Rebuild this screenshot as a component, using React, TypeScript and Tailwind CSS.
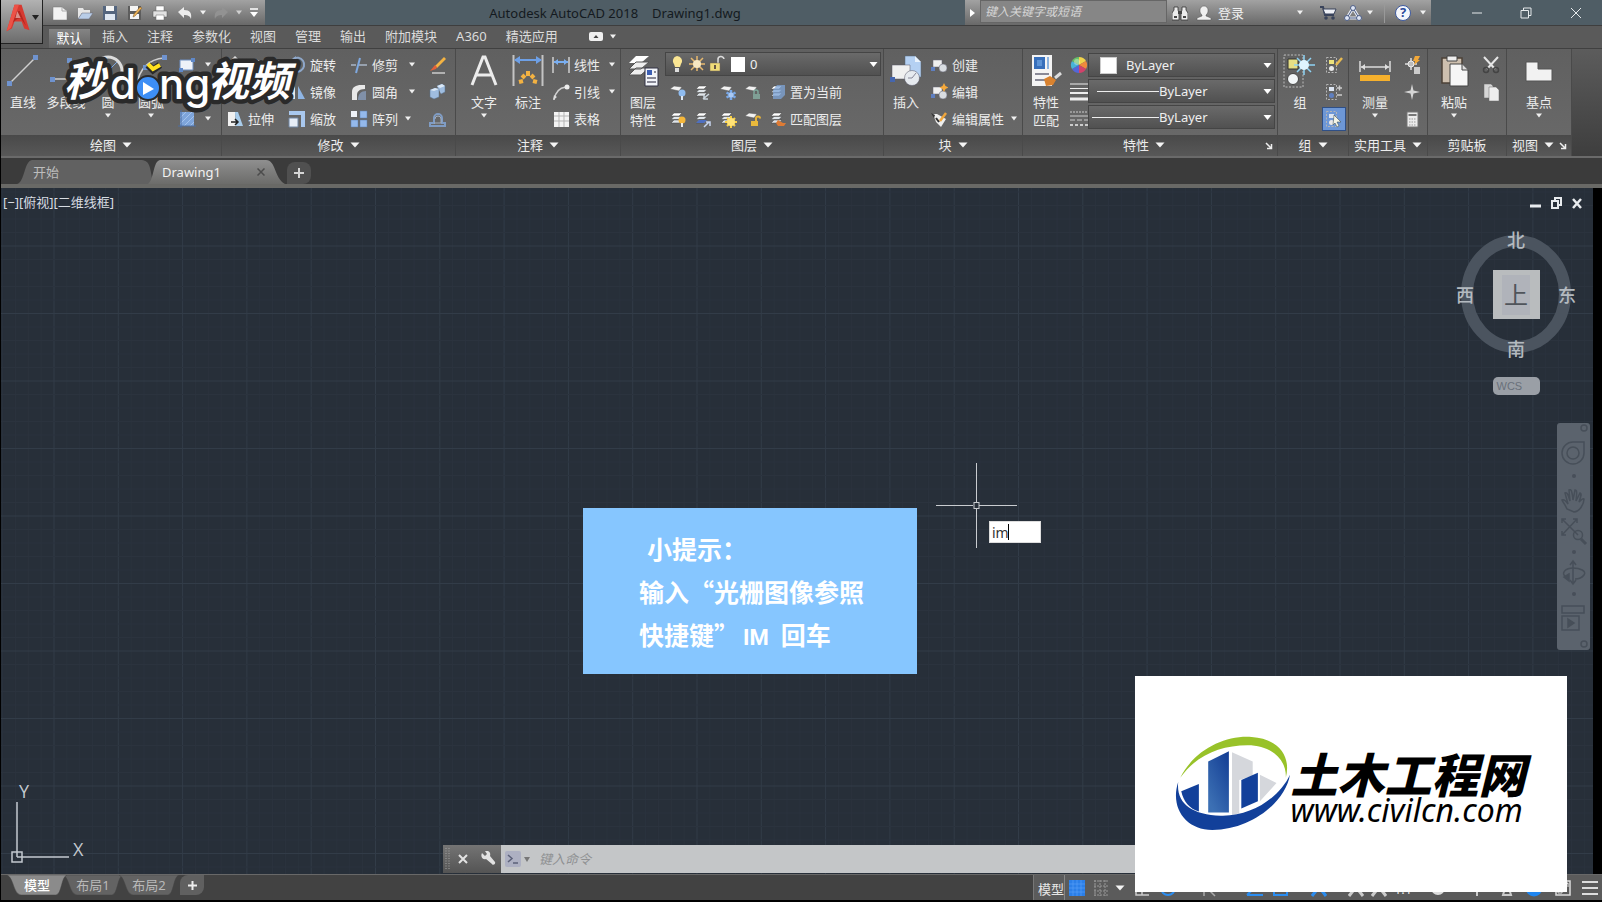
import React from 'react';

type IconProps = { w?: number; h?: number; box?: string; className?: string; children: React.ReactNode };

const Icon = ({ w = 18, h = 18, box, className = '', children }: IconProps) => (
  <svg width={w} height={h} viewBox={box || `0 0 ${w} ${h}`} fill="none" className={`shrink-0 ${className}`} aria-hidden="true">
    {children}
  </svg>
);

const Caret = ({ className = '' }: { className?: string }) => (
  <Icon w={8} h={5} className={className}><path d="M1 0.5h6l-3 4z" fill="#f0f0f0" /></Icon>
);

const BigCaret = () => <Icon w={10} h={6}><path d="M0.5 0.5h9l-4.5 5z" fill="#f4f4f4" /></Icon>;

const Launcher = () => (
  <Icon w={8} h={8} className="absolute right-1 top-[7px]">
    <path d="M1 1l5 5M6.5 2v4.5H2" stroke="#eee" strokeWidth="1.5" />
  </Icon>
);

/* ---------- ribbon building blocks ---------- */

type PanelProps = { title: string; width: string; caret?: boolean; launcher?: boolean; children: React.ReactNode };

const Panel = ({ title, width, caret = true, launcher, children }: PanelProps) => (
  <section className={`flex shrink-0 flex-col border-r border-[#4a4a4a] bg-linear-to-b from-[#606060] to-[#6a6a6a] ${width}`}>
    <div className="flex h-[86px]">{children}</div>
    <div className={`relative flex h-[21px] items-center justify-center gap-1.5 bg-linear-to-b from-[#494949] to-[#585858] pb-0.5 ${launcher ? 'pr-3' : ''}`}>
      <span>{title}</span>
      {caret && <BigCaret />}
      {launcher && <Launcher />}
    </div>
  </section>
);

type BigProps = { label: string; sub?: string; caret?: boolean; width?: string; children: React.ReactNode };

const BigButton = ({ label, sub, caret, width = 'w-11', children }: BigProps) => (
  <button className={`flex shrink-0 flex-col items-center pt-1.5 ${width}`}>
    {children}
    <span className="mt-1.5 leading-[18px] whitespace-nowrap">{label}</span>
    {sub && <span className="leading-[18px]">{sub}</span>}
    {caret && <Caret className="mt-0.5" />}
  </button>
);

const Column = ({ className = '', children }: { className?: string; children: React.ReactNode }) => (
  <div className={`flex shrink-0 flex-col pt-0.5 ${className}`}>{children}</div>
);

type SmallProps = { icon: React.ReactNode; label?: string; caret?: string; name?: string };

const SmallButton = ({ icon, label, caret, name }: SmallProps) => (
  <button className="flex h-[27px] items-center gap-0.5 whitespace-nowrap" aria-label={label ? undefined : name}>
    <span className="flex w-[22px] justify-center">{icon}</span>
    {label && <span>{label}</span>}
    {caret && <Caret className={caret} />}
  </button>
);

/* ---------- small icons ---------- */

const sheets = (
  <>
    <path d="M5 3h8l-3 3H2z" fill="#fff" stroke="#444" strokeWidth="0.5" />
    <path d="M5 6.5h8l-3 3H2zM5 10h8l-3 3H2z" fill="#dfe5ea" stroke="#444" strokeWidth="0.5" />
  </>
);
const oneSheet = <path d="M1 6l4-3 8 1-3 4z" fill="#f2f2f2" stroke="#555" strokeWidth="0.5" />;

const LayerIcon = ({ kind }: { kind: number }) => (
  <Icon>
    {[0, 2, 3, 8].includes(kind) ? oneSheet : sheets}
    {kind === 0 && <><circle cx="13" cy="10" r="3.5" fill="#8fbcf0" /><path d="M12 13h2v4h-2z" fill="#dfe9f5" /></>}
    {kind === 1 && <path d="M9 16l6-5M10 12v4h4" stroke="#c9d4dd" strokeWidth="1.5" />}
    {kind === 2 && <><path d="M12 7v10M7.5 9.5l9 5M16.5 9.5l-9 5" stroke="#78a8e8" strokeWidth="2.5" /><circle cx="12" cy="12" r="2.5" fill="#a9c8f2" /></>}
    {kind === 3 && <><path d="M10 11V9a2 2 0 014 0v2" stroke="#7da69a" strokeWidth="1.5" /><path d="M9 11h7v5H9z" fill="#7f9f95" /></>}
    {kind === 4 && <path d="M8 2h8v10l-4 4H4V7z" fill="#7fa6d8" opacity=".75" />}
    {kind === 5 && <><circle cx="13" cy="10" r="3.5" fill="#f5b73b" /><path d="M12 13h2v4h-2z" fill="#eee" /></>}
    {kind === 6 && <><path d="M5 10h8l-3 3H2z" fill="#4e6fc0" /><path d="M10 17l5-5M12 12h4v4" stroke="#c7d5f0" strokeWidth="1.5" /></>}
    {kind === 7 && <><path d="M12 6v12M6 12h12M8 8l8 8M16 8l-8 8" stroke="#f7cf45" strokeWidth="2" /><circle cx="12" cy="12" r="4" fill="#ffe277" /></>}
    {kind === 8 && <><path d="M12 11V8.500a2 2 0 014 0" stroke="#e8b53a" strokeWidth="2" /><path d="M7 11h7v5H7z" fill="#e9b93c" /></>}
    {kind === 9 && <path d="M9 10l5 3h3l-2 3-6 0-2-3z" fill="#dd7b35" />}
  </Icon>
);

const TrimIcon = () => <Icon><path d="M1 9h5M9 9h8" stroke="#a9b7c8" strokeWidth="1.5" /><path d="M10 2L6 17" stroke="#7fa9e0" strokeWidth="2" /></Icon>;
const FilletIcon = () => <Icon><path d="M2 17V9c0-5 4-7 9-7h4v4C9 6 7 9 7 12v5z" fill="#e8e8e8" /><path d="M8 17c0-6 3-9 8-9v9z" fill="#8090a8" /></Icon>;
const ArrayIcon = () => <Icon><path d="M1 1h6v6H1z" fill="#eef2f8" /><path d="M10 1h7v7h-7zM1 10h7v7H1zM10 10h7v7h-7z" fill="#94b9ec" stroke="#5f7fae" strokeWidth="0.5" /></Icon>;
const EraseIcon = () => <Icon><path d="M16 1l-9 9 2 2 9-9z" fill="#f4b342" /><path d="M7 9l-5 6 6-2 1-2z" fill="#e2603a" /><path d="M4 17h13" stroke="#ccc" strokeWidth="1.5" /></Icon>;
const ExplodeIcon = () => <Icon><path d="M2 7l5-2 4 1v8l-5 2-4-2zM9 3l5-2 3 2v6l-4 2" fill="#9fbde0" stroke="#55708f" strokeWidth="0.5" /><path d="M2 7l5-2 4 1-5 2zM9 3l5-2 3 2-5 2z" fill="#dbe8f6" /></Icon>;
const OffsetIcon = () => <Icon><path d="M2 16h15v-3h-3V8a4 4 0 00-8 0v5H2z" stroke="#7f9cc4" strokeWidth="2" /><path d="M6 13h7V9a3 3 0 00-6 0" stroke="#a3aebd" /></Icon>;
const StretchIcon = () => <Icon><path d="M2 2h7l1 14H2z" fill="#f1f1f1" /><path d="M9 2h3l5 14h-7z" fill="#a9cdec" /><path d="M5 12h6M9 9l3 3-3 3" stroke="#222" strokeWidth="1.5" /></Icon>;
const ScaleIcon = () => <Icon><path d="M1 1h16v16h-4V5H1z" fill="#a9c8ee" /><path d="M1 8h9v9H1z" fill="#e6edf6" stroke="#7086a3" /></Icon>;
const MirrorIcon = () => <Icon><path d="M7 3v13H1z" fill="#e8e8e8" /><path d="M10 3v13h7z" fill="#8fb5e4" /></Icon>;
const RotateIcon = () => <Icon><path d="M5 3a7 7 0 11-2 9" stroke="#8ea7c9" strokeWidth="2" /><path d="M8 0L3 4l5 3z" fill="#8ea7c9" /></Icon>;
const MoveIcon = () => <Icon><path d="M9 1v16M1 9h16M6 4l3-3 3 3M6 14l3 3 3-3" stroke="#ddd" strokeWidth="1.5" /></Icon>;
const RectIcon = () => <Icon><path d="M2 4h13v10H2z" fill="#eef2f8" stroke="#6f8fc0" /><path d="M13 2h4v4h-4zM1 12h4v4H1z" fill="#5f88c8" /></Icon>;
const HatchIcon = () => <Icon><path d="M2 2h14v14H2z" fill="#7ea5db" /><path d="M2 8l6-6M2 14L14 2M6 16L16 6M12 16l4-4" stroke="#a4c3ec" /><path d="M0 16h18M3 0v18" stroke="#4c6ea3" /></Icon>;
const LinearDim = () => <Icon><path d="M1 1v16M17 1v16" stroke="#cfcfcf" strokeWidth="1.5" /><path d="M2 6h14" stroke="#79aef0" strokeWidth="2" /><path d="M2 6l4-3v6zM16 6l-4-3v6z" fill="#79aef0" /></Icon>;
const LeaderIcon = () => <Icon><path d="M2 17C3 10 6 5 14 4" stroke="#cfcfcf" strokeWidth="1.5" /><circle cx="15" cy="4" r="2.5" fill="#eee" /><path d="M1 17l1-5 3 2z" fill="#ddd" /></Icon>;
const TableIcon = () => <Icon><path d="M2 2h15v15H2z" fill="#f4f4f4" /><path d="M2 6h15M2 11h15M7 2v15M12 2v15" stroke="#b5b5b5" /></Icon>;
const BlockIcon = ({ kind }: { kind: number }) => (
  <Icon>
    {kind < 2 && <><path d="M3 4h9v7H3z" fill="#f0f0f0" stroke="#667" strokeWidth="0.5" /><circle cx="13" cy="12" r="4" fill="#d9dde2" stroke="#667" strokeWidth="0.5" /><path d="M1 11h4v4H1z" fill="#5f7fc0" /></>}
    {kind === 1 && <path d="M14 0l1.500 3 3 1.500-3 1.500-1.500 3-1.500-3-3-1.500 3-1.500z" fill="#f6a93a" />}
    {kind === 2 && <><path d="M3 4l4 0 9 5-5 8-5-5z" fill="#eee" /><path d="M1 3l4 2-1 3z" fill="#333" /><path d="M16 3l-6 8" stroke="#f0a63c" strokeWidth="2.5" /><path d="M6 8l3 4" stroke="#333" strokeWidth="2" /></>}
  </Icon>
);
const GroupIcon = ({ kind }: { kind: number }) => (
  <Icon>
    <path d="M1.500 1.500h10v15h-10z" stroke="#b5b5b5" strokeDasharray="2 1.5" />
    <path d="M4 4h5v4H4z" fill={kind === 0 ? '#ede27a' : '#dce5f2'} />
    <circle cx="6.5" cy="12.5" r="2.5" fill={kind === 1 ? '#5f7fc0' : '#e8e8e8'} />
    {kind === 0 && <path d="M17 2l-6 7" stroke="#e8bb52" strokeWidth="2.5" />}
    {kind === 1 && <path d="M12 5h5M14.500 2.500v5M12 12h5" stroke="#ccc" strokeWidth="1.5" />}
    {kind === 2 && <path d="M9 5l7 7h-4l2 4-2 1-2-4-2 2z" fill="#f4f4e6" stroke="#344" strokeWidth="0.5" />}
  </Icon>
);

/* ---------- title bar ---------- */

const QuickButton = ({ name, children }: { name: string; children: React.ReactNode }) => (
  <button aria-label={name} className="flex h-6 w-[25px] items-center justify-center">{children}</button>
);

const TitleBar = () => (
  <div className="flex h-[25px] bg-[#4f5d65]">
    <div className="flex w-[222px] items-center bg-linear-to-b from-[#a2a2a2] to-[#696969] pl-1">
      <QuickButton name="新建"><Icon w={16} h={16}><path d="M1 2h9l5 4v9H1z" fill="#f2f2f2" stroke="#777" strokeWidth="0.5" /><path d="M10 2v4h5" stroke="#aaa" /></Icon></QuickButton>
      <QuickButton name="打开"><Icon w={16} h={16}><path d="M1 3h5l1 2h6v3H5l-4 6z" fill="#e6e6e6" /><path d="M5 8h11l-4 6H1z" fill="#b9cde8" stroke="#667" strokeWidth="0.5" /></Icon></QuickButton>
      <QuickButton name="保存"><Icon w={16} h={16}><path d="M1 1h14v14H1z" fill="#54657e" /><path d="M4 1h8v5H4z" fill="#f5f5f5" /><path d="M3 9h10v6H3z" fill="#dfe7f2" /></Icon></QuickButton>
      <QuickButton name="另存为"><Icon w={16} h={16}><path d="M1 1h13v14H1z" fill="#5d5d5d" /><path d="M3 1h8v5H3zM3 9h9v5H3z" fill="#f5f5f5" /><path d="M15 3l-7 8-2 1 1-3 6-7z" fill="#eeb45a" stroke="#7a5522" strokeWidth="0.5" /></Icon></QuickButton>
      <QuickButton name="打印"><Icon w={16} h={16}><path d="M4 1h8v5H4z" fill="#fff" stroke="#666" strokeWidth="0.5" /><path d="M1 6h14v6H1z" fill="#e2e2e2" stroke="#555" strokeWidth="0.5" /><path d="M4 10h8v5H4z" fill="#fff" stroke="#666" strokeWidth="0.5" /></Icon></QuickButton>
      <QuickButton name="放弃"><Icon w={16} h={16}><path d="M1 7l6-5v3c6 0 8 3 7 9-1-3-3-4-7-4v3z" fill="#ececec" /></Icon></QuickButton>
      <span className="flex w-[11px] justify-center"><Caret /></span>
      <QuickButton name="重做"><Icon w={16} h={16}><path d="M15 7L9 2v3C3 5 1 8 2 14c1-3 3-4 7-4v3z" fill="#929292" /></Icon></QuickButton>
      <span className="flex w-[11px] justify-center"><Caret className="opacity-70" /></span>
      <button aria-label="自定义" className="flex w-5 justify-center"><Icon w={10} h={9}><path d="M1 1h8" stroke="#fff" strokeWidth="1.5" /><path d="M1 4h8l-4 5z" fill="#fff" /></Icon></button>
    </div>
    <div className="flex flex-1 items-center justify-center gap-3.5 text-[13px] text-[#141a20]">
      <span>Autodesk AutoCAD 2018</span>
      <span>Drawing1.dwg</span>
    </div>
    <div className="flex w-[466px] items-center bg-linear-to-b from-[#a2a2a2] to-[#696969]">
      <span className="flex w-[15px] justify-center"><Icon w={5} h={8}><path d="M0 0l5 4-5 4z" fill="#fff" /></Icon></span>
      <input aria-label="搜索" placeholder="键入关键字或短语" className="h-[23px] w-[187px] self-start border border-[#666] bg-[#868686] px-1 text-xs text-white italic outline-none placeholder:text-[#d6d6d6]" />
      <QuickButton name="搜索">
        <Icon w={16} h={16}><path d="M2 2h4v3l1 3v7H0V8l2-3zM10 2h4v3l2 3v7H9V8l1-3z" fill="#ececec" stroke="#333" strokeWidth="0.8" /><path d="M6 6h4v3H6zM2 11h3v2H2zM11 11h3v2h-3z" fill="#444" /></Icon>
      </QuickButton>
      <button className="flex items-center gap-1.5 text-[13px] text-[#efefef]">
        <Icon w={16} h={16} className="ml-1"><path d="M8 1c5 0 5 7 2 9v1l5 2v2H1v-2l5-2v-1C3 8 3 1 8 1z" fill="#f0f0f0" stroke="#555" strokeWidth="0.5" /></Icon>
        登录
      </button>
      <Caret className="ml-auto" />
      <button aria-label="购物车" className="ml-3 flex w-6 justify-center"><Icon w={18} h={16}><path d="M1 2h3l2 8h9" stroke="#39435a" strokeWidth="2" /><path d="M4 4h13l-2 5H6z" fill="#eef0f6" stroke="#39435a" /><circle cx="7" cy="13" r="1.8" fill="#39435a" /><circle cx="14" cy="13" r="1.8" fill="#39435a" /></Icon></button>
      <button aria-label="A360" className="flex w-[26px] items-center justify-center"><Icon w={18} h={16}><path d="M9 3l6 10H3z" stroke="#e8ecf5" strokeWidth="3" /><path d="M9 3l6 10H3z" stroke="#4d5e86" /><circle cx="9" cy="3" r="2.5" fill="#dfe6f5" stroke="#4d5e86" /><circle cx="3" cy="13" r="2.5" fill="#dfe6f5" stroke="#4d5e86" /><circle cx="15" cy="13" r="2.5" fill="#dfe6f5" stroke="#4d5e86" /></Icon></button>
      <Caret />
      <span className="ml-2.5 h-5 w-px bg-[#999]" />
      <button aria-label="帮助" className="ml-2.5 flex size-4 items-center justify-center rounded-full border border-[#3e5aa0] bg-[#f4f6fb] text-[13px] leading-none font-bold text-[#2b4b9b]">?</button>
      <Caret className="mr-1 ml-2" />
    </div>
    <div className="flex w-[171px] items-center text-[#e6eaec]">
      <button aria-label="最小化" className="flex flex-1 justify-center pl-5"><Icon w={12} h={12}><path d="M1 6h10" stroke="currentColor" /></Icon></button>
      <button aria-label="还原" className="flex w-12 justify-center"><Icon w={12} h={12}><path d="M1 3.500h7.500V11H1zM3.500 3V1H11v7.500H9" stroke="currentColor" /></Icon></button>
      <button aria-label="关闭" className="flex w-13 justify-center"><Icon w={12} h={12}><path d="M1 1l10 10M11 1L1 11" stroke="currentColor" /></Icon></button>
    </div>
  </div>
);

const menuTabs = ['插入', '注释', '参数化', '视图', '管理', '输出', '附加模块', 'A360', '精选应用'];

const Header = () => (
  <header className="flex h-12 bg-[#585858]">
    <button aria-label="应用程序菜单" className="flex h-11 w-[42px] items-center justify-between border-r border-b border-[#222] bg-linear-to-b from-[#b2b2b2] to-[#6c6c6c] pr-0.5 pb-2 pl-1">
      <Icon w={27} h={30} box="0 0 27 34">
        <path d="M9 2h8l9 29-6-2-3-8H9l-3 8-6 3z" fill="#d63a31" />
        <path d="M12 9l-6 14 6-5 4-1 6 9L15 9z" fill="#b3261f" />
        <path d="M9 2h5L5 28l-5 4z" fill="#ec5247" />
        <path d="M12 9l-2 8h6z" fill="#d98f88" />
      </Icon>
      <Icon w={8} h={5}><path d="M0 0h7l-3.500 5z" fill="#222" /></Icon>
    </button>
    <div className="flex min-w-0 flex-1 flex-col">
      <TitleBar />
      <nav className="flex flex-1 items-end border-t border-[#3e3e3e] bg-[#5a5a5a] pl-1.5 text-[#dcdcdc]">
        <button className="h-[19px] w-[41px] bg-linear-to-b from-[#848484] to-[#666] leading-[15px] text-white">默认</button>
        <div className="flex h-[19px] gap-[19px] pb-1 pl-3">
          {menuTabs.map((t) => <button key={t} className="leading-[15px] whitespace-nowrap">{t}</button>)}
          <button aria-label="功能区显示" className="ml-3 flex items-center gap-1.5">
            <Icon w={14} h={9}><rect width="14" height="9" rx="2" fill="#f0f0f0" /><path d="M4.500 6h5L7 3z" fill="#444" /></Icon>
            <Caret />
          </button>
        </div>
      </nav>
    </div>
  </header>
);

/* ---------- ribbon ---------- */

const selectStyle = 'h-6 w-full appearance-none rounded-none border border-[#454545] bg-linear-to-b from-[#6a6a6a] to-[#515151] text-[13px] text-[#f0f0f0] outline-none';

type PropSelectProps = { name: string; pad: string; value: string; children: React.ReactNode };

const PropSelect = ({ name, pad, value, children }: PropSelectProps) => (
  <div className="relative">
    <select aria-label={name} className={`${selectStyle} ${pad}`}><option>{value}</option></select>
    <div className="pointer-events-none absolute inset-0 flex items-center">
      {children}
      <span className="mr-[3px] ml-auto"><Icon w={9} h={5}><path d="M0.500 0h8l-4 5z" fill="#fff" /></Icon></span>
    </div>
  </div>
);

const Ribbon = () => (
  <div className="flex h-[110px] border-t border-b-2 border-t-[#404040] border-b-[#6a6a6a] bg-linear-to-b from-[#5c5c5c] to-[#3e3e3e]">
    <Panel title="绘图" width="w-[221px]">
      <BigButton label="直线"><Icon w={32} h={32}><path d="M3 28L28 3" stroke="#cfcfcf" strokeWidth="1.5" /><path d="M0 26h5v5H0zM26 0h5v5h-5z" fill="#6f93cf" /></Icon></BigButton>
      <BigButton label="多段线" width="w-[42px]"><Icon w={32} h={32}><path d="M2 24h14c12 0 12-16 4-18" stroke="#cfcfcf" strokeWidth="1.5" /><path d="M0 22h5v5H0zM17 3h5v5h-5z" fill="#6f93cf" /></Icon></BigButton>
      <BigButton label="圆" width="w-[42px]" caret><Icon w={32} h={32}><circle cx="16" cy="16" r="14" stroke="#ddd" strokeWidth="3" /><path d="M16 16l9-9" stroke="#7fa9e0" /></Icon></BigButton>
      <BigButton label="圆弧" caret><Icon w={32} h={32}><path d="M2 30C4 14 14 4 29 3" stroke="#cfcfcf" strokeWidth="1.5" /><path d="M27 0h5v5h-5zM8 10h5v5H8z" fill="#6f93cf" /></Icon></BigButton>
      <Column className="pl-[3px]">
        <SmallButton name="矩形" icon={<RectIcon />} caret="ml-1" />
        <SmallButton name="椭圆" icon={<Icon><ellipse cx="9" cy="9" rx="7" ry="4" stroke="#ddd" /></Icon>} caret="ml-1" />
        <SmallButton name="图案填充" icon={<HatchIcon />} caret="ml-1" />
      </Column>
    </Panel>
    <Panel title="修改" width="w-[234px]">
      <Column className="w-[62px] pl-0.5">
        <SmallButton icon={<MoveIcon />} label="移动" />
        <SmallButton icon={<Icon><circle cx="6" cy="9" r="4" stroke="#ddd" /><circle cx="12" cy="9" r="4" stroke="#7fa9e0" /></Icon>} label="复制" />
        <SmallButton icon={<StretchIcon />} label="拉伸" />
      </Column>
      <Column className="w-[62px] pl-0.5">
        <SmallButton icon={<RotateIcon />} label="旋转" />
        <SmallButton icon={<MirrorIcon />} label="镜像" />
        <SmallButton icon={<ScaleIcon />} label="缩放" />
      </Column>
      <Column className="w-[78px] pl-0.5">
        <SmallButton icon={<TrimIcon />} label="修剪" caret="ml-2" />
        <SmallButton icon={<FilletIcon />} label="圆角" caret="ml-2" />
        <SmallButton icon={<ArrayIcon />} label="阵列" caret="ml-1" />
      </Column>
      <Column className="pl-0.5">
        <SmallButton name="删除" icon={<EraseIcon />} />
        <SmallButton name="分解" icon={<ExplodeIcon />} />
        <SmallButton name="偏移" icon={<OffsetIcon />} />
      </Column>
    </Panel>
    <Panel title="注释" width="w-[165px]">
      <div className="w-1.5" />
      <BigButton label="文字" caret><Icon w={28} h={32}><path d="M2 30L13 2h2l11 28M6 20h16" stroke="#ececec" strokeWidth="3" /></Icon></BigButton>
      <BigButton label="标注">
        <Icon w={32} h={32}>
          <path d="M1.500 0v31M30.500 0v31" stroke="#c4c4c4" strokeWidth="2" /><path d="M3 5h26" stroke="#6ea0e6" strokeWidth="2" /><path d="M2 5l6-4v8zM30 5l-6-4v8z" fill="#6ea0e6" />
          <path d="M7 27l4-1M10 20l3 3M16 16v5M22 20l-3 3M25 27l-4-1" stroke="#f3b242" strokeWidth="4" />
        </Icon>
      </BigButton>
      <Column>
        <SmallButton icon={<LinearDim />} label="线性" caret="ml-1.5" />
        <SmallButton icon={<LeaderIcon />} label="引线" caret="ml-1.5" />
        <SmallButton icon={<TableIcon />} label="表格" />
      </Column>
    </Panel>
    <Panel title="图层" width="w-[263px]">
      <BigButton label="图层" sub="特性">
        <Icon w={32} h={32}>
          <path d="M9 1h13l-8 7H2z" fill="#fff" /><path d="M9 7h13l-8 7H2zM9 13h13l-8 7H2z" fill="#eee" stroke="#555" />
          <path d="M18 13h13v18H18z" fill="#f2f5fa" stroke="#334" /><path d="M20 15h5v5h-5z" fill="#3c5fb4" /><path d="M20 23h9M20 27h9M27 17h2" stroke="#667" strokeWidth="1.5" />
        </Icon>
      </BigButton>
      <div className="flex flex-1 flex-col pt-[3px] pr-0.5">
        <PropSelect name="图层" pad="pl-[84px]" value="0">
          <Icon w={76} h={20} className="ml-1.5">
            <path d="M6 2a5 5 0 00-3 8l1 3h5l1-3a5 5 0 00-4-8z" fill="#fbe693" /><path d="M4 14h4v4H4z" fill="#ddd" />
            <path d="M26 2v15M18 10h16M20 4l12 12M32 4L20 16" stroke="#e7b96f" strokeWidth="1.5" /><circle cx="26" cy="10" r="4" fill="#f8e8c2" />
            <path d="M47 10V6a3 3 0 016-1" stroke="#ddd" strokeWidth="1.5" /><path d="M39 9h10v8H39z" fill="#f0dc78" stroke="#765" strokeWidth="0.5" /><path d="M43 11h2v4h-2z" fill="#654" />
            <path d="M60 3h14v15H60z" fill="#fff" />
          </Icon>
        </PropSelect>
        <div className="mt-0.5 flex items-center">
          {[0, 1, 2, 3, 4].map((k) => <button key={k} aria-label={`图层工具 ${k + 1}`} className="flex h-[27px] w-[25px] items-center justify-center"><LayerIcon kind={k} /></button>)}
          <button>置为当前</button>
        </div>
        <div className="flex items-center">
          {[5, 6, 7, 8, 9].map((k) => <button key={k} aria-label={`图层工具 ${k + 1}`} className="flex h-[27px] w-[25px] items-center justify-center"><LayerIcon kind={k} /></button>)}
          <button>匹配图层</button>
        </div>
      </div>
    </Panel>
    <Panel title="块" width="w-[139px]">
      <BigButton label="插入">
        <Icon w={32} h={32}>
          <path d="M15 1h10l6 6v15H15z" fill="#b4d0f2" stroke="#567" strokeWidth="0.5" /><path d="M25 1v6h6" fill="#e9f2fc" />
          <path d="M2 10h18v14H2z" fill="#f0f0f0" stroke="#556" strokeWidth="0.5" /><circle cx="22" cy="23" r="7.5" fill="#e6eaef" stroke="#556" strokeWidth="0.5" /><path d="M22 23l4-5M22 23h-4" stroke="#889" /><path d="M0 22h5v5H0z" fill="#4566ae" />
        </Icon>
      </BigButton>
      <Column>
        <SmallButton icon={<BlockIcon kind={0} />} label="创建" />
        <SmallButton icon={<BlockIcon kind={1} />} label="编辑" />
        <SmallButton icon={<BlockIcon kind={2} />} label="编辑属性" caret="ml-1" />
      </Column>
    </Panel>
    <Panel title="特性" width="w-[255px]" launcher>
      <BigButton label="特性" sub="匹配" width="w-[46px]">
        <Icon w={32} h={32}>
          <path d="M2 0h20v31H2z" fill="#f4f4f4" /><path d="M4 2h11v12H4z" fill="#376fbb" /><path d="M7 5h5v6H7z" fill="#5c93d6" /><path d="M18 2v12" stroke="#8db4e0" strokeWidth="2" />
          <path d="M5 19h14M5 25h11" stroke="#667" strokeWidth="1.5" /><path d="M14 24l6-3 6 4-3 5-7 1z" fill="#d9822f" /><path d="M25 23l6-5" stroke="#ddd" strokeWidth="3" />
        </Icon>
      </BigButton>
      <Column className="w-[19px] items-center">
        <span className="flex h-[27px] items-center">
          <Icon w={18} h={18}><path d="M9 9V1a8 8 0 017 4z" fill="#f0d34b" /><path d="M9 9l7-4a8 8 0 010 8z" fill="#f08a3c" /><path d="M9 9l7 4a8 8 0 01-7 4z" fill="#d2426b" /><path d="M9 9v8a8 8 0 01-7-4z" fill="#5566d8" /><path d="M9 9l-7 4a8 8 0 010-8z" fill="#46b3d8" /><path d="M9 9L2 5a8 8 0 017-4z" fill="#68c068" /><circle cx="7" cy="6" r="3" fill="#fff" opacity=".35" /></Icon>
        </span>
        <span className="flex h-[27px] items-center"><Icon w={18} h={18}><path d="M0 1h18M0 5.500h18" stroke="#eee" /><path d="M0 10h18" stroke="#eee" strokeWidth="2" /><path d="M0 16h18" stroke="#eee" strokeWidth="3" /></Icon></span>
        <span className="flex h-[27px] items-center"><Icon w={18} h={18}><path d="M0 2h18" stroke="#ccc" strokeDasharray="2 1" /><path d="M0 6h18" stroke="#ccc" /><path d="M0 10h18" stroke="#ccc" strokeDasharray="5 2" /><path d="M0 15h18" stroke="#ccc" strokeWidth="2" strokeDasharray="3 2" /></Icon></span>
      </Column>
      <div className="flex flex-1 flex-col gap-0.5 pt-1 pr-0.5">
        <PropSelect name="对象颜色" pad="pl-[37px]" value="ByLayer"><span className="ml-3 size-[17px] border border-[#ccc] bg-white" /></PropSelect>
        <PropSelect name="线宽" pad="pl-[70px]" value="ByLayer"><span className="ml-[9px] h-px w-[62px] bg-[#eee]" /></PropSelect>
        <PropSelect name="线型" pad="pl-[70px]" value="ByLayer"><span className="ml-1 h-px w-[67px] bg-[#eee]" /></PropSelect>
      </div>
    </Panel>
    <Panel title="组" width="w-[71px]">
      <BigButton label="组">
        <Icon w={34} h={34} className="-my-px">
          <path d="M1 1h19v32H1z" stroke="#bbb" strokeDasharray="2 1.5" /><path d="M5 5h10v10H5z" fill="#e6df85" stroke="#333" /><circle cx="10" cy="25" r="5.5" fill="#f2f6f8" stroke="#444" />
          <path d="M21 1v20M11 11h21M14 4l14 14M28 4L14 18" stroke="#8fd3f5" strokeWidth="1.5" /><circle cx="21" cy="11" r="5" fill="#dff5ff" />
        </Icon>
      </BigButton>
      <Column className="w-6 items-center">
        <SmallButton name="编辑组" icon={<GroupIcon kind={0} />} />
        <SmallButton name="解除编组" icon={<GroupIcon kind={1} />} />
        <button aria-label="启用组选择" className="mt-0.5 flex size-6 items-center justify-center border border-[#2f4f86] bg-[#6d97d6]"><GroupIcon kind={2} /></button>
      </Column>
    </Panel>
    <Panel title="实用工具" width="w-[79px]">
      <BigButton label="测量" width="w-[52px]" caret>
        <Icon w={32} h={32}><path d="M1 6v11M31 6v11" stroke="#ddd" strokeWidth="1.5" /><path d="M2 12h28" stroke="#ddd" strokeWidth="1.5" /><path d="M2 12l4-3v6zM30 12l-4-3v6z" fill="#ddd" /><path d="M1 20h30v6H1z" fill="#f6b12d" /></Icon>
      </BigButton>
      <Column>
        <SmallButton name="快速选择" icon={<Icon><path d="M8 2v12M2 8h12" stroke="#ddd" strokeWidth="1.5" /><circle cx="8" cy="8" r="3" fill="#bbb" stroke="#eee" /><path d="M12 0h5l-2 4h2l-6 5 1-4h-2z" fill="#f2a838" /><path d="M11 11h6v7h-6z" fill="#ccc" /></Icon>} />
        <SmallButton name="点" icon={<Icon><path d="M9 1l1.500 6.500L17 9l-6.500 1.500L9 17l-1.500-6.500L1 9l6.500-1.500z" fill="#d6d6d6" /></Icon>} />
        <SmallButton name="计算器" icon={<Icon><path d="M4 2h11v15H4z" fill="#ececec" stroke="#777" /><path d="M5.500 4h8v2h-8z" fill="#777" /><path d="M6 9h7M6 12h7M6 15h7" stroke="#999" strokeDasharray="1.5 1" /></Icon>} />
      </Column>
    </Panel>
    <Panel title="剪贴板" width="w-[79px]" caret={false}>
      <BigButton label="粘贴" width="w-[52px]" caret>
        <Icon w={32} h={32}>
          <path d="M4 3h20v25H4z" fill="#cdbfae" stroke="#4c4137" strokeWidth="1.5" /><path d="M9 1h10v5H9z" fill="#eee" stroke="#444" />
          <path d="M12 9h12l6 6v16H12z" fill="#f6f6f6" stroke="#444" /><path d="M24 9v6h6" fill="#ddd" stroke="#444" />
        </Icon>
      </BigButton>
      <Column>
        <SmallButton name="剪切" icon={<Icon><path d="M2 1l11 12M16 1L5 13" stroke="#e6e6e6" strokeWidth="2" /><circle cx="4" cy="14" r="2.5" stroke="#444" strokeWidth="1.5" /><circle cx="14" cy="14" r="2.5" stroke="#444" strokeWidth="1.5" /></Icon>} />
        <SmallButton name="复制" icon={<Icon><path d="M2 1h7l2 2v12H2z" fill="#d6d6d6" stroke="#666" strokeWidth="0.5" /><path d="M7 4h7l3 3v11H7z" fill="#eee" stroke="#666" strokeWidth="0.5" /></Icon>} />
      </Column>
    </Panel>
    <Panel title="视图" width="w-[65px]" launcher>
      <BigButton label="基点" width="w-16" caret>
        <Icon w={28} h={32}><path d="M1 7h12v7h14v12H1z" fill="#f2f2f2" stroke="#555" /></Icon>
      </BigButton>
    </Panel>
  </div>
);

/* ---------- drawing tabs ---------- */

const FileTabs = () => (
  <div className="flex h-[30px] items-end border-b-4 border-[#696966] bg-[#3b3b3b] pl-4">
    <button className="relative h-6 w-[137px] pl-4 text-left text-[#bdbdbd]">
      <svg className="absolute inset-0" width="137" height="24" aria-hidden="true"><path d="M0 24C8 22 7 1 15 0h108c10 0 10 6 13 24z" fill="#616161" /></svg>
      <span className="relative">开始</span>
    </button>
    <div className="relative -ml-1.5 flex h-6 w-[137px] items-center justify-between pr-5 pl-3.5 text-[#f2f2f2]">
      <svg className="absolute inset-0" width="137" height="24" aria-hidden="true">
        <defs><linearGradient id="tab" x2="0" y2="1"><stop stopColor="#8f8f8f" /><stop offset="1" stopColor="#6c6c6a" /></linearGradient></defs>
        <path d="M0 24C6 20 5 1 12 0h106c10 0 8 18 19 24z" fill="url(#tab)" />
      </svg>
      <button className="relative">Drawing1</button>
      <button aria-label="关闭图形" className="relative"><Icon w={8} h={8}><path d="M0.500 0.500l7 7M7.500 0.500l-7 7" stroke="#4c4c4c" strokeWidth="1.5" /></Icon></button>
    </div>
    <button aria-label="新图形" className="relative ml-0.5 flex h-[22px] w-6 items-center justify-center rounded-tl-lg rounded-tr-lg rounded-br-lg bg-[#505050] text-white">
      <Icon w={10} h={10}><path d="M5 0v10M0 5h10" stroke="#d6d6d6" strokeWidth="2" /></Icon>
    </button>
  </div>
);

/* ---------- model space ---------- */

const stepX = 64.3;
const stepY = 67.5;
const cols = Array.from({ length: 126 }, (_, i) => i);
const rows = Array.from({ length: 54 }, (_, i) => i);

const CanvasGrid = () => (
  <svg className="absolute inset-0 h-full w-full" aria-hidden="true">
    {cols.map((i) => (
      <path key={`c${i}`} d={`M${53 + (i - 5) * (stepX / 5)} 0V1000`} stroke={i % 5 === 0 ? '#323c48' : '#2b333e'} />
    ))}
    {rows.map((i) => (
      <path key={`r${i}`} d={`M0 ${58 + (i - 5) * (stepY / 5)}H2000`} stroke={i % 5 === 0 ? '#323c48' : '#2b333e'} />
    ))}
  </svg>
);

const ViewCube = () => (
  <div className="absolute top-[38px] right-[17px] flex w-[120px] flex-col items-center pt-1 text-lg leading-5 font-medium text-[#b4bac0]">
    <svg className="absolute top-[9px] left-[5px]" width="110" height="118" aria-hidden="true"><ellipse cx="55" cy="59" rx="49" ry="53" fill="none" stroke="#4b545f" strokeWidth="12" /></svg>
    <button className="relative">北</button>
    <div className="relative mt-5 flex w-full items-center justify-between">
      <button>西</button>
      <button className="flex h-[49px] w-[47px] items-center justify-center bg-[#b9bcbe] text-2xl font-normal text-[#50555b]"><span className="bg-[#b0b3ba] px-0.5 py-1">上</span></button>
      <button>东</button>
    </div>
    <button className="relative mt-5">南</button>
    <button className="mt-[18px] h-[18px] w-[47px] rounded-[5px] bg-[#9a9fa6] pl-1 text-left font-['Liberation_Sans'] text-[11px] leading-[18px] text-[#69707a]">WCS</button>
  </div>
);

const NavBar = () => (
  <div className="absolute top-[235px] right-[3px] flex h-[227px] w-[33px] flex-col items-center rounded-[3px] bg-[#5b636d] text-[#474f59]">
    <Icon w={33} h={227}>
      <g stroke="currentColor" strokeWidth="1.5">
        <circle cx="27" cy="5" r="3" /><circle cx="27" cy="221" r="3" />
        <path d="M27 20v10a11 11 0 11-11-11h11z" /><circle cx="16" cy="30" r="6" />
        <path d="M10 86c-2-5-5-8-5-9 2-1 4 1 6 4l-3-11c2-1 3 1 5 8l-1-11c2-1 3 0 4 10l2-10c2 0 2 2 1 11l4-8c2 1 1 3-1 9 2-2 4-4 5-3 0 4-4 13-10 13z" />
        <path d="M5 96l16 16M20 96L5 112M5 100v-4h4M16 96h4v4M5 108v4h4" /><circle cx="21" cy="112" r="4.5" /><path d="M24 116l5 5" strokeWidth="3" />
        <path d="M16 138v23M13 142l3-4 3 4M13 157l3 4 3-4" /><path d="M9 154c-6-4 0-9 7-9s14 3 11 7-6 4-9 4" /><path d="M12 151l-5 3 5 4z" fill="currentColor" />
        <path d="M5 183h22v7H5zM5 193h17v14H5z" /><path d="M11 196l6 4-6 4z" fill="currentColor" />
      </g>
      <g fill="currentColor"><circle cx="17" cy="53" r="2" /><circle cx="17" cy="129" r="2" /><circle cx="17" cy="171" r="2" /></g>
    </Icon>
  </div>
);

const Cursor = () => (
  <div className="absolute top-[275px] left-[935px]">
    <Icon w={82} h={86}><path d="M0 42.500h37M43 42.500h38M40.500 0v39M40.500 46v39" stroke="#c9ccd0" /><rect x="38" y="39.5" width="5" height="6" stroke="#c9ccd0" /></Icon>
    <input aria-label="动态输入" defaultValue="im" className="absolute top-[58px] left-[53px] h-[22px] w-[52px] border border-[#ddd] bg-white pl-0.5 text-sm leading-5 text-[#333] outline-none" />
    <span className="absolute top-[61px] left-[72px] h-4 w-px bg-black" />
  </div>
);

const CommandLine = () => (
  <div className="absolute right-[33px] bottom-px left-[442px] flex h-7">
    <div className="flex w-[58px] items-center gap-2 bg-linear-to-b from-[#747474] to-[#545454] pl-0.5">
      <Icon w={5} h={22}><path d="M1 0v22M4 0v22" stroke="#a5a5a5" strokeDasharray="1 1.5" /></Icon>
      <button aria-label="关闭命令行"><Icon w={10} h={10}><path d="M1 1l8 8M9 1L1 9" stroke="#e2e2e2" strokeWidth="2" /></Icon></button>
      <button aria-label="自定义命令行" className="ml-1"><Icon w={16} h={16}><path d="M2 2l3 3 2-2-2-3c4-1 6 2 5 5l5 6c1 2-2 4-3 2L6 8C3 9 0 6 2 2z" fill="#e2e2e2" /></Icon></button>
    </div>
    <label className="flex flex-1 items-center bg-[#c4c6c8] pl-1">
      <Icon w={16} h={16}><rect width="16" height="16" rx="2" fill="#adb0c2" /><path d="M3 4l4 3.500L3 11M8 12h5" stroke="#5b6078" strokeWidth="1.5" /></Icon>
      <Icon w={7} h={5} className="ml-[3px]"><path d="M0 0h6l-3 5z" fill="#777" /></Icon>
      <input aria-label="命令" placeholder="键入命令" className="ml-2 flex-1 bg-transparent text-[13px] text-[#444] italic outline-none placeholder:text-[#8f9193]" />
    </label>
  </div>
);

const Canvas = () => (
  <main className="relative mr-[9px] flex-1 overflow-hidden bg-[#272f39]">
    <CanvasGrid />
    <p className="relative pt-1 pl-0.5 text-[13px] text-[#d7dce2]">[−][俯视][二维线框]</p>
    <div className="absolute top-[9px] right-[11px] flex items-center gap-2.5 text-[#e8ebee]">
      <button aria-label="最小化图形"><Icon w={11} h={12}><path d="M0 9h11" stroke="currentColor" strokeWidth="3" /></Icon></button>
      <button aria-label="还原图形"><Icon w={11} h={12}><path d="M1 4h6v7H1zM4 3V1h6v7H8" stroke="currentColor" strokeWidth="2" /></Icon></button>
      <button aria-label="关闭图形窗口"><Icon w={10} h={12}><path d="M1 2l8 9M9 2l-8 9" stroke="currentColor" strokeWidth="2.5" /></Icon></button>
    </div>
    <ViewCube />
    <NavBar />
    <Cursor />
    <svg className="absolute bottom-2 left-[9px]" width="80" height="86" fill="none" aria-hidden="true">
      <path d="M7 22v55M7 77h52M2 72h10v10H2z" stroke="#c3c9cf" strokeWidth="1.5" />
      <text x="9" y="18" fill="#c3c9cf" fontFamily="Open Sans" fontSize="18">Y</text>
      <text x="63" y="76" fill="#c3c9cf" fontFamily="Open Sans" fontSize="18">X</text>
    </svg>
    <div className="absolute top-[320px] left-[582px] h-[166px] w-[334px] bg-[#86c6ff] pt-[19px] pl-14 font-['Noto_Sans_CJK_SC',sans-serif] text-[25px] leading-[43px] font-bold text-white">
      <p className="pl-2">小提示：</p>
      <p>输入“光栅图像参照</p>
      <p>快捷键”<span className="pl-1 font-['Roboto'] text-[22px]">IM</span><span className="pl-3">回车</span></p>
    </div>
    <CommandLine />
  </main>
);

/* ---------- status bar ---------- */

const LayoutTab = ({ label, active }: { label: string; active?: boolean }) => (
  <button className={`relative -ml-1 h-5 w-[60px] ${active ? 'z-10 font-medium text-white' : 'text-[#b9b9b9]'}`}>
    <svg className="absolute inset-0" width="60" height="20" aria-hidden="true"><path d="M0 0h60c-6 2-5 19-11 20H14C6 19 7 3 0 0z" fill={active ? '#8b8b8b' : '#636363'} stroke="#444" strokeWidth="0.5" /></svg>
    <span className="relative leading-[18px]">{label}</span>
  </button>
);

const StatusButton = ({ name, width, children }: { name: string; width: string; children: React.ReactNode }) => (
  <button aria-label={name} className={`flex items-center justify-center ${width}`}>{children}</button>
);

const PersonIcon = ({ color }: { color: string }) => <Icon w={18} h={18}><path d="M9 1v8M9 8l-7 9M9 8l7 9M4 6h10" stroke={color} strokeWidth="3" /></Icon>;

const StatusBar = () => (
  <footer className="flex h-[26px] justify-between border-t border-[#686868] bg-[#424242] text-[13px] text-[#e6e6e6]">
    <div className="flex pl-2.5">
      <LayoutTab label="模型" active />
      <LayoutTab label="布局1" />
      <LayoutTab label="布局2" />
      <button aria-label="新建布局" className="ml-px flex h-5 w-6 items-center justify-center rounded-tl-lg rounded-br-lg bg-[#606060]">
        <Icon w={9} h={9}><path d="M4.500 0v9M0 4.500h9" stroke="#eee" strokeWidth="2" /></Icon>
      </button>
    </div>
    <div className="flex w-[569px] border-l border-[#777] bg-[#5b5b5b]">
      <button className="w-[33px] border-r border-[#858585] pl-1 text-center leading-7 whitespace-nowrap">模型</button>
      <StatusButton name="栅格" width="w-[26px]"><Icon w={16} h={16}><path d="M0 0h16v16H0z" fill="#2b7fe8" /><path d="M4 0v16M8 0v16M12 0v16M0 4h16M0 8h16M0 12h16" stroke="#5aa3f8" strokeWidth="0.6" /></Icon></StatusButton>
      <StatusButton name="捕捉" width="w-[25px]"><Icon w={16} h={16}><path d="M1 1h15M1 6h15M1 11h15M1 15h15M2 0v16M7 0v16M12 0v16" stroke="#999" strokeDasharray="2 1" /></Icon></StatusButton>
      <StatusButton name="捕捉选项" width="w-[15px]"><BigCaret /></StatusButton>
      <StatusButton name="正交" width="w-8"><Icon w={16} h={18}><path d="M2 1v15h13M2 10h6v6" stroke="#ccc" strokeWidth="1.5" /></Icon></StatusButton>
      <StatusButton name="极轴" width="w-6"><Icon w={18} h={18}><circle cx="9" cy="9" r="7" stroke="#2b8df0" strokeWidth="2" /></Icon></StatusButton>
      <StatusButton name="等轴测" width="w-[68px]"><Icon w={18} h={18}><path d="M2 1v16M4 8l9 9" stroke="#aaa" strokeWidth="1.5" /></Icon></StatusButton>
      <StatusButton name="追踪" width="w-[27px]"><Icon w={18} h={18}><path d="M1 16L16 2M1 16h16" stroke="#2b8df0" strokeWidth="2" /></Icon></StatusButton>
      <StatusButton name="对象捕捉" width="w-7"><Icon w={18} h={18}><path d="M2 2h13v14H2z" stroke="#2b8df0" strokeWidth="2" /></Icon></StatusButton>
      <StatusButton name="注释可见" width="w-[54px]"><PersonIcon color="#2b8df0" /></StatusButton>
      <StatusButton name="自动缩放" width="w-6"><PersonIcon color="#ccc" /></StatusButton>
      <StatusButton name="注释比例" width="w-[26px]"><PersonIcon color="#ccc" /></StatusButton>
      <span className="w-[26px] text-center leading-7">1:1</span>
      <StatusButton name="工作空间" width="w-12"><Icon w={16} h={18}><circle cx="8" cy="9" r="5" stroke="#ddd" strokeWidth="4" /></Icon></StatusButton>
      <StatusButton name="监视器" width="w-9"><Icon w={16} h={18}><path d="M8 2v15M2 9h12" stroke="#ccc" strokeWidth="2" /></Icon></StatusButton>
      <StatusButton name="隔离" width="w-7"><Icon w={16} h={18}><path d="M8 3l4 13H4z" stroke="#ccc" strokeWidth="2" /></Icon></StatusButton>
      <StatusButton name="硬件加速" width="w-[30px]"><Icon w={18} h={18}><circle cx="9" cy="9" r="8.5" fill="#1f86f0" /></Icon></StatusButton>
      <StatusButton name="全屏" width="w-8"><Icon w={16} h={16}><path d="M1 1h14v14H1z" stroke="#ddd" strokeWidth="1.5" /><path d="M8 8l5-5M9 3h4v4M3 9h4v4H3z" stroke="#ddd" /></Icon></StatusButton>
      <StatusButton name="自定义状态栏" width="w-[26px]"><Icon w={16} h={16}><path d="M0 2h16M0 8h16M0 14h16" stroke="#ddd" strokeWidth="2" /></Icon></StatusButton>
    </div>
  </footer>
);

/* ---------- overlays ---------- */

const VideoMark = () => (
  <svg className="absolute top-[42px] left-[50px]" width="264" height="86" viewBox="-8 -14 264 86" aria-label="秒dong视频">
    <g fill="#fff" stroke="#2a2a2a" strokeWidth="9" strokeLinejoin="round" paintOrder="stroke" fontWeight="700">
      <text x="6" y="40" fontFamily="Noto Sans CJK SC" fontSize="41" fontStyle="italic">秒</text>
      <text x="52" y="43" fontFamily="Inter" fontSize="42" fontWeight="500">d</text>
      <text x="101" y="43" fontFamily="Inter" fontSize="42" fontWeight="500">ng</text>
      <text x="150" y="40" fontFamily="Noto Sans CJK SC" fontSize="41" fontStyle="italic">视频</text>
    </g>
    <circle cx="90" cy="32" r="12" fill="#3d8ef5" stroke="#2a2a2a" strokeWidth="2" />
    <path d="M85 26v13l11-6z" fill="#fff" />
    <path d="M90 9l5 5 7-5" fill="none" stroke="#2a2a2a" strokeWidth="7" />
    <path d="M90 8l5 5 7-4" fill="none" stroke="#ffe11f" strokeWidth="4" />
  </svg>
);

const SiteCard = () => (
  <aside className="absolute right-[35px] bottom-2.5 flex h-[216px] w-[432px] items-center justify-center bg-white pr-1">
    <svg width="118" height="96" viewBox="0 0 114 94" preserveAspectRatio="none" className="shrink-0" aria-hidden="true">
      <defs><linearGradient id="tower" x1="1" y1="0" x2="0.3" y2="1"><stop stopColor="#123c93" /><stop offset="1" stopColor="#3c70b4" /></linearGradient></defs>
      <path d="M57 16l20 9v14l-13 4v33l-7 1zM84 38l16 8-16 18z" fill="#d5d7dc" />
      <path d="M8 54l17-7v27c-9-3-15-10-17-20z" fill="#12409a" />
      <path d="M34 25l20-10v60H34z" fill="url(#tower)" />
      <path d="M66 43l16-7v28l-16 7z" fill="#12409a" />
      <path d="M7 41C20 14 50-1 76 1c28 2 38 20 33 40C110 24 96 9 72 9 46 9 22 19 7 41z" fill="#98c229" />
      <path d="M5 45C-3 70 12 92 38 92c38 0 71-28 75-54C103 60 76 79 46 78 18 77 3 66 5 45z" fill="#12409a" />
    </svg>
    <div className="flex flex-col pt-1.5 text-black">
      <span className="text-[47px] leading-[46px] font-black whitespace-nowrap italic">土木工程网</span>
      <a href="#" className="font-['Noto_Sans'] text-[32px] leading-6 italic">www.civilcn.com</a>
    </div>
  </aside>
);

const App: React.FC = () => (
  <div className="relative flex h-screen min-w-[1571px] flex-col overflow-hidden bg-black pb-0.5 pl-px font-['Noto_Sans','Noto_Sans_CJK_SC',sans-serif] text-[13px] leading-5 text-[#ececec]" lang="zh-CN">
    <Header />
    <Ribbon />
    <FileTabs />
    <Canvas />
    <StatusBar />
    <VideoMark />
    <SiteCard />
  </div>
);

export default App;
